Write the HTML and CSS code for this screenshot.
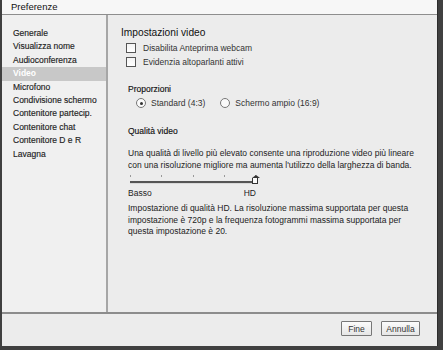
FILE: index.html
```html
<!DOCTYPE html>
<html>
<head>
<meta charset="utf-8">
<link rel="stylesheet" href="styles.css">
</head>
<body>
<div class="dialog">
  <div class="titlebar">Preferenze</div>
  <div class="main">
    <ul class="sidebar">
      <li>Generale</li>
      <li>Visualizza nome</li>
      <li>Audioconferenza</li>
      <li class="sel">Video</li>
      <li>Microfono</li>
      <li>Condivisione schermo</li>
      <li>Contenitore partecip.</li>
      <li>Contenitore chat</li>
      <li>Contenitore D e R</li>
      <li>Lavagna</li>
    </ul>
    <div class="content">
      <h1 class="heading">Impostazioni video</h1>
      <div class="checks">
        <label class="check"><span class="box"></span>Disabilita Anteprima webcam</label>
        <label class="check"><span class="box"></span>Evidenzia altoparlanti attivi</label>
      </div>
      <div class="section">
        <h2 class="subhead">Proporzioni</h2>
        <div class="radios">
          <label class="radio"><span class="circle on"></span>Standard (4:3)</label>
          <label class="radio"><span class="circle"></span>Schermo ampio (16:9)</label>
        </div>
      </div>
      <div class="section quality">
        <h2 class="subhead">Qualità video</h2>
        <p class="text">Una qualità di livello più elevato consente una riproduzione video più lineare con una risoluzione migliore ma aumenta l'utilizzo della larghezza di banda.</p>
        <div class="slider">
          <div class="ticks"><i></i><i></i><i></i><i></i><i></i></div>
          <div class="track"><span class="thumb"></span></div>
          <div class="labels"><span>Basso</span><span>HD</span></div>
        </div>
        <p class="text">Impostazione di qualità HD. La risoluzione massima supportata per questa impostazione è 720p e la frequenza fotogrammi massima supportata per questa impostazione è 20.</p>
      </div>
    </div>
  </div>
  <div class="footer">
    <button class="btn">Fine</button>
    <button class="btn">Annulla</button>
  </div>
</div>
</body>
</html>
```
FILE: styles.css
```css
html, body {
  margin: 0;
  padding: 0;
  background: #404040;
  width: 443px;
  height: 350px;
  overflow: hidden;
}
body {
  font-family: "Liberation Sans", Arial, sans-serif;
  font-size: 8.5px;
  color: #1e1e1e;
}
.dialog {
  margin-left: 2px;
  width: 436px;
  height: 346px;
  background: #ececec;
  display: flex;
  flex-direction: column;
  box-sizing: border-box;
  border-right: 1px solid #2c2c2c;
}
.titlebar {
  height: 14px;
  line-height: 14px;
  background: #f7f7f7;
  border-bottom: 1px solid #8e8e8e;
  padding-left: 9px;
  font-size: 9.5px;
  color: #111;
}
.main {
  flex: 1;
  display: flex;
  min-height: 0;
}
.sidebar {
  list-style: none;
  margin: 0;
  padding: 12px 0 0 0;
  width: 104px;
  background: #f0f0f0;
  border-right: 2px solid #a6a6a6;
}
.sidebar li {
  height: 13.4px;
  line-height: 13.4px;
  padding-left: 11px;
  color: #222;
  -webkit-text-stroke: 0.15px #222;
}
.sidebar li.sel {
  background: #c8c8c8;
  color: #fff;
  font-weight: bold;
  -webkit-text-stroke: 0;
}
.content {
  flex: 1;
  padding: 11px 0 0 13px;
}
.heading {
  margin: 0;
  font-size: 10.2px;
  font-weight: normal;
  line-height: 14px;
  color: #111;
}
.checks {
  margin: 1px 0 0 5px;
  display: flex;
  flex-direction: column;
}
.check, .radio {
  display: flex;
  align-items: center;
  height: 14px;
  color: #333;
}
.box {
  width: 8px;
  height: 8px;
  border: 1px solid #555;
  background: linear-gradient(#f4f4f4, #fff);
  margin-right: 7px;
}
.section {
  margin: 14px 0 0 7px;
}
.subhead {
  margin: 0;
  font-size: 8.5px;
  font-weight: normal;
  line-height: 12px;
  color: #111;
  -webkit-text-stroke: 0.15px #111;
}
.radios {
  display: flex;
  margin: 1px 0 0 8px;
  gap: 15px;
}
.circle {
  width: 8px;
  height: 8px;
  border: 1px solid #777;
  border-radius: 50%;
  background: #fafafa;
  margin-right: 5px;
  position: relative;
}
.circle.on::after {
  content: "";
  position: absolute;
  left: 2.5px;
  top: 2.5px;
  width: 3px;
  height: 3px;
  border-radius: 50%;
  background: #333;
}
.quality {
  margin-top: 15px;
}
.text {
  margin: 11px 0 0 0;
  line-height: 11.5px;
  width: 300px;
  color: #222;
}
.slider {
  width: 130px;
  margin-top: 3px;
}
.ticks {
  display: flex;
  justify-content: space-between;
  padding: 0 2px;
  height: 7px;
}
.ticks i {
  width: 1px;
  height: 2px;
  background: #999;
  margin-top: 1px;
}
.track {
  height: 2px;
  margin: 0 5px 0 2px;
  background: #555;
  border-bottom: 1px solid #d8d8d8;
  position: relative;
}
.thumb {
  position: absolute;
  right: -5px;
  top: -3px;
  width: 6px;
  height: 6px;
  background: #fafafa;
  border: 1px solid #333;
  border-top: none;
  box-sizing: border-box;
}
.thumb::before {
  content: "";
  position: absolute;
  left: -1px;
  top: -3px;
  width: 0;
  height: 0;
  border-left: 4px solid transparent;
  border-right: 4px solid transparent;
  border-bottom: 3px solid #333;
}
.labels {
  display: flex;
  justify-content: space-between;
  margin-top: 4px;
  padding-right: 2px;
  line-height: 11px;
  color: #222;
}
.slider + .text {
  margin-top: 4px;
}
.footer {
  border-top: 2px solid #8c8c8c;
  display: flex;
  justify-content: flex-end;
  align-items: flex-start;
  padding: 7px 17px 0 0;
  gap: 9px;
  box-sizing: border-box;
  height: 34px;
}
.btn {
  font-family: "Liberation Sans", Arial, sans-serif;
  font-size: 8.5px;
  height: 15px;
  padding: 0;
  background: linear-gradient(#fbfbfb, #e6e6e6);
  border: 1px solid #777;
  border-radius: 1px;
  color: #333;
  width: 31px;
}
.btn + .btn {
  width: 39px;
}
```
